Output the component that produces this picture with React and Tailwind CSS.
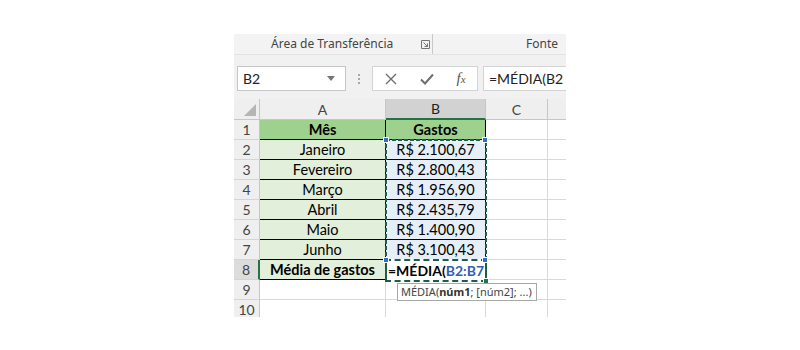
import React from "react";

const cellFont = { fontFamily: "Lato, 'Open Sans', sans-serif" };

function RowHeader({ n, active }) {
  return (
    <div
      className={
        "w-[26px] shrink-0 h-full flex items-center justify-center text-[14px] text-[#444] border-b border-[#d4d4d4] " +
        (active
          ? "bg-[#dcdcdc] border-r-2 border-r-[#217346]"
          : "bg-[#efefef] border-r border-r-[#c6c6c6]")
      }
    >
      {n}
    </div>
  );
}

function Row({ n, a, b, aCls = "", bCls = "", tableA, tableB, active }) {
  return (
    <div className="flex h-[20px]">
      <RowHeader n={n} active={active} />
      <div
        className={
          "w-[126px] shrink-0 flex items-center justify-center text-[14.5px] text-black border-r border-b " +
          (tableA ? "border-black " : "border-[#d9d9d9] ") +
          aCls
        }
      >
        {a}
      </div>
      <div
        className={
          "w-[100px] shrink-0 flex items-center justify-center text-[14.5px] text-black border-r border-b " +
          (tableB ? "border-black " : "border-[#d9d9d9] ") +
          bCls
        }
      >
        {b}
      </div>
      <div className="w-[62px] shrink-0 border-r border-b border-[#d9d9d9]" />
      <div className="flex-1 border-b border-[#d9d9d9]" />
    </div>
  );
}

function Corner({ x, y, green }) {
  return (
    <div
      className={
        "absolute w-[6px] h-[6px] border border-white " +
        (green ? "bg-[#217346]" : "bg-[#2f6fc8]")
      }
      style={{ left: x - 3, top: y - 3 }}
    />
  );
}

export default function App() {
  const data = [
    ["Janeiro", "R$ 2.100,67"],
    ["Fevereiro", "R$ 2.800,43"],
    ["Março", "R$ 1.956,90"],
    ["Abril", "R$ 2.435,79"],
    ["Maio", "R$ 1.400,90"],
    ["Junho", "R$ 3.100,43"],
  ];
  return (
    <div className="w-[800px] h-[350px] bg-white overflow-hidden">
      <div className="ml-[234px] pt-[34px]">
        <div className="w-[332px] h-[283px] overflow-hidden flex flex-col" style={cellFont}>
          {/* Ribbon labels */}
          <div
            className="h-[21px] shrink-0 flex bg-[#f3f3f3] border-b border-[#e3e3e3] text-[12px] text-[#444]"
            style={{ fontFamily: "'Noto Sans', 'Open Sans', sans-serif" }}
          >
            <div className="w-[199px] shrink-0 flex items-center justify-between pl-[37px] pr-[2px] border-r border-[#c8c8c8]">
              <span>Área de Transferência</span>
              <svg width="9" height="9" viewBox="0 0 9 9" className="mt-[1px]">
                <path d="M0.5 8.5V0.5H8.5V8.5Z" fill="none" stroke="#777" strokeWidth="1" />
                <path d="M2.5 2.5L6.5 6.5M6.5 3.5V6.5H3.5" fill="none" stroke="#777" strokeWidth="1" />
              </svg>
            </div>
            <div className="flex-1 flex items-center justify-end pr-[8px]">Fonte</div>
          </div>

          {/* Formula bar */}
          <div className="h-[44px] shrink-0 bg-[#f1f1f1] flex pt-[11px]">
            <div className="ml-[3px] w-[109px] h-[25px] bg-white border border-[#c6c6c6] flex items-center justify-between pl-[5px] pr-[10px] text-[14px] text-[#222]">
              <span>B2</span>
              <svg width="8" height="5" viewBox="0 0 8 5">
                <path d="M0 0H8L4 5Z" fill="#777" />
              </svg>
            </div>
            <div className="w-[26px] h-[25px] flex flex-col items-center justify-center gap-[2px]">
              <div className="w-[2px] h-[2px] bg-[#a8a8a8]" />
              <div className="w-[2px] h-[2px] bg-[#a8a8a8]" />
              <div className="w-[2px] h-[2px] bg-[#a8a8a8]" />
            </div>
            <div className="w-[106px] h-[25px] bg-white border border-[#d4d4d4] flex items-center">
              <div className="w-[36px] flex justify-center">
                <svg width="12" height="12" viewBox="0 0 12 12">
                  <path d="M1 1L11 11M11 1L1 11" stroke="#6e6e6e" strokeWidth="1.4" />
                </svg>
              </div>
              <div className="w-[36px] flex justify-center">
                <svg width="14" height="12" viewBox="0 0 14 12">
                  <path d="M1 6.5L5 10.5L13 1.5" fill="none" stroke="#6e6e6e" strokeWidth="2" />
                </svg>
              </div>
              <div
                className="w-[32px] flex justify-center italic text-[15px] text-[#555] leading-none"
                style={{ fontFamily: "'Liberation Serif', serif" }}
              >
                f<span className="text-[11px] mt-[3px]">x</span>
              </div>
            </div>
            <div className="ml-[5px] flex-1 h-[25px] bg-white border border-[#d4d4d4] border-r-0 flex items-center pl-[5px] text-[14px] text-[#222]">
              =MÉDIA(B2
            </div>
          </div>

          {/* Column headers */}
          <div className="h-[21px] shrink-0 flex bg-[#efefef] text-[14px] text-[#444]">
            <div className="w-[26px] shrink-0 border-r border-b border-[#c6c6c6] flex items-end justify-end pr-[3px] pb-[3px]">
              <svg width="12" height="12" viewBox="0 0 12 12">
                <path d="M12 0V12H0Z" fill="#b5b5b5" />
              </svg>
            </div>
            <div className="w-[126px] shrink-0 border-r border-b border-[#c6c6c6] flex items-center justify-center">A</div>
            <div className="w-[100px] shrink-0 border-r border-r-[#c6c6c6] border-b-2 border-b-[#217346] bg-[#d2d2d2] flex items-center justify-center text-[#1f1f1f]">B</div>
            <div className="w-[62px] shrink-0 border-r border-b border-[#c6c6c6] flex items-center justify-center">C</div>
            <div className="flex-1 border-b border-[#c6c6c6]" />
          </div>

          {/* Grid */}
          <div className="relative flex-1">
            <Row n={1} a="Mês" b="Gastos" aCls="bg-[#9fd18e] font-bold" bCls="bg-[#9fd18e] font-bold" tableA tableB />
            {data.map((d, i) => (
              <Row
                key={i}
                n={i + 2}
                a={d[0]}
                b={d[1]}
                aCls="bg-[#e2efda]"
                bCls="bg-[#e6eef8]"
                tableA
                tableB
              />
            ))}
            <Row n={8} a="Média de gastos" b="" aCls="bg-[#e2efda] font-bold" tableA active />
            <Row n={9} a="" b="" />
            <Row n={10} a="" b="" />

            {/* Range B2:B7 marching ants */}
            <svg className="absolute left-[151px] top-[19px]" width="103" height="123" viewBox="0 0 103 123">
              <rect x="1" y="1" width="100" height="120" fill="none" stroke="#1c5e4b" strokeWidth="2" strokeDasharray="4 2" />
            </svg>

            {/* Active cell B8 */}
            <div className="absolute left-[151px] top-[139px] w-[102px] h-[23px] bg-white border-2 border-[#1c5e4b] [border-top-style:dashed] [border-bottom-style:dashed] flex items-center pl-[1px] text-[14px] font-bold whitespace-nowrap">
              <span className="text-black">=MÉDIA(</span>
              <span className="text-[#2f5fb8]">B2:B7</span>
              <span className="ml-[2px] w-[1px] h-[14px] bg-black" />
            </div>

            <Corner x={152} y={20} />
            <Corner x={251} y={20} />
            <Corner x={152} y={140} />
            <Corner x={251} y={140} />
            <Corner x={252} y={161} green />

            {/* Tooltip */}
            <div
              className="absolute left-[163px] top-[163px] w-[140px] h-[18px] bg-white border border-[#a8a8a8] flex items-center pl-[3px] text-[11px] text-[#444] whitespace-nowrap"
              style={{ fontFamily: "'Noto Sans', 'Open Sans', sans-serif" }}
            >
              MÉDIA(<b className="text-[#333]">núm1</b>; [núm2]; ...)
            </div>
          </div>
        </div>
      </div>
    </div>
  );
}
